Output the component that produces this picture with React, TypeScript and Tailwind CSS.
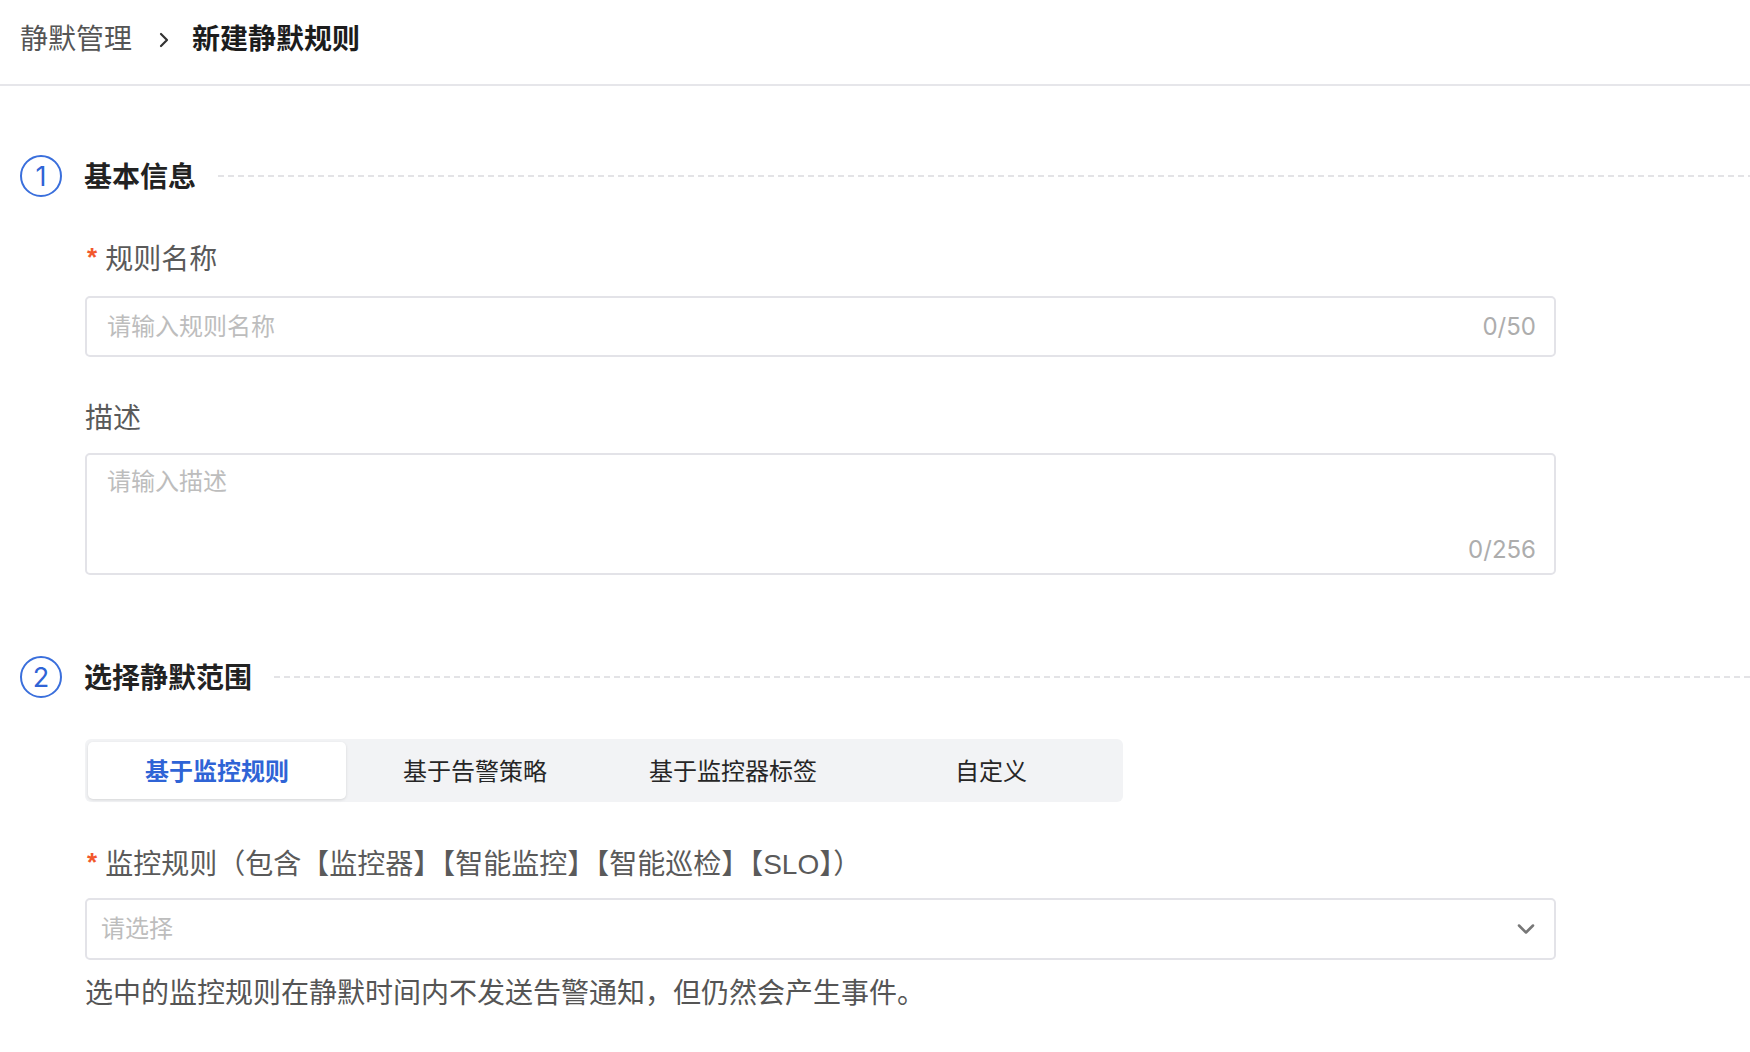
import { ChevronDown } from 'lucide-react'

const font = 'font-["Liberation_Sans","Noto_Sans_CJK_SC",sans-serif]'
const digits = 'font-["Inter","Noto_Sans_CJK_SC",sans-serif]'

const tabs = ['基于监控规则', '基于告警策略', '基于监控器标签', '自定义']

function SectionTitle({ num, title }: { num: number; title: string }) {
  return (
    <div className="flex items-center h-[42px] pl-[20px]">
      <div className={`w-[42px] h-[42px] shrink-0 rounded-full border-2 border-[#3a6fdc] flex items-center justify-center text-[27px] leading-none text-[#2f64d6] ${digits}`}>
        {num}
      </div>
      <h2 className="ml-[22px] mt-[3px] text-[28px] leading-[40px] font-bold text-[#222]">{title}</h2>
      <div className="flex-1 ml-[22px] h-[2px] bg-[repeating-linear-gradient(to_right,#e3e3e6_0_6px,transparent_6px_10px)]" />
    </div>
  )
}

function Label({ text, required = false }: { text: string; required?: boolean }) {
  return (
    <div className="flex items-center h-[40px] text-[28px] leading-[40px] text-[#5a5a5a]">
      {required && <span className="text-[#f2582c] text-[26px] font-bold mr-[8px] mt-[-6px] ml-[2px]">*</span>}
      <span>{text}</span>
    </div>
  )
}

export default function App() {
  return (
    <div className={`min-h-screen bg-white ${font}`}>
      {/* Breadcrumb header */}
      <header className="h-[86px] border-b-2 border-[#e6e6ea] flex items-center pb-[4px] px-[20px]">
        <span className="text-[28px] leading-[40px] text-[#555]">静默管理</span>
        <svg width="12" height="18" viewBox="0 0 12 18" className="ml-[26px] mr-[22px]">
          <polyline points="3,3 9,9 3,15" fill="none" stroke="#333" strokeWidth="2.2" strokeLinecap="round" strokeLinejoin="round" />
        </svg>
        <span className="text-[28px] leading-[40px] font-bold text-[#1c1c1c]">新建静默规则</span>
      </header>

      {/* Section 1 */}
      <div className="mt-[69px]">
        <SectionTitle num={1} title="基本信息" />
      </div>
      <div className="pl-[85px] pr-[194px]">
        <div className="mt-[43px]">
          <Label text="规则名称" required />
        </div>
        <div className="mt-[16px] h-[61px] border-2 border-[#e3e3e8] rounded-[5px] flex items-center justify-between pl-[20px] pr-[18px]">
          <span className="text-[24px] text-[#bdbdbd]">请输入规则名称</span>
          <span className={`text-[24px] text-[#adadad] ${digits}`}>0/50</span>
        </div>

        <div className="mt-[42px]">
          <Label text="描述" />
        </div>
        <div className="mt-[14px] h-[122px] border-2 border-[#e3e3e8] rounded-[5px] flex flex-col justify-between pl-[20px] pr-[18px] pt-[12px] pb-[8px]">
          <span className="text-[24px] leading-[30px] text-[#bdbdbd]">请输入描述</span>
          <span className={`self-end text-[24px] leading-[30px] text-[#adadad] ${digits}`}>0/256</span>
        </div>
      </div>

      {/* Section 2 */}
      <div className="mt-[81px]">
        <SectionTitle num={2} title="选择静默范围" />
      </div>
      <div className="pl-[85px] pr-[194px]">
        <div className="mt-[41px] inline-flex p-[3px] rounded-[6px] bg-[#f2f3f5]">
          {tabs.map((t, i) => (
            <div
              key={t}
              className={
                i === 0
                  ? 'w-[258px] h-[57px] pt-[2px] flex items-center justify-center rounded-[5px] bg-white shadow-[0_1px_3px_rgba(0,0,0,0.12)] text-[24px] font-bold text-[#2f64d6]'
                  : 'w-[258px] h-[57px] pt-[2px] flex items-center justify-center text-[24px] text-[#262626]'
              }
            >
              {t}
            </div>
          ))}
        </div>

        <div className="mt-[43px]">
          <Label text="监控规则（包含【监控器】【智能监控】【智能巡检】【SLO】）" required />
        </div>
        <div className="mt-[13px] h-[62px] border-2 border-[#e3e3e8] rounded-[5px] flex items-center justify-between pl-[14px] pr-[14px]">
          <span className="text-[24px] text-[#bdbdbd]">请选择</span>
          <ChevronDown size={28} strokeWidth={2.2} className="text-[#777]" />
        </div>
        <p className="mt-[14px] text-[28px] leading-[40px] text-[#555]">
          选中的监控规则在静默时间内不发送告警通知，但仍然会产生事件。
        </p>
      </div>
    </div>
  )
}
